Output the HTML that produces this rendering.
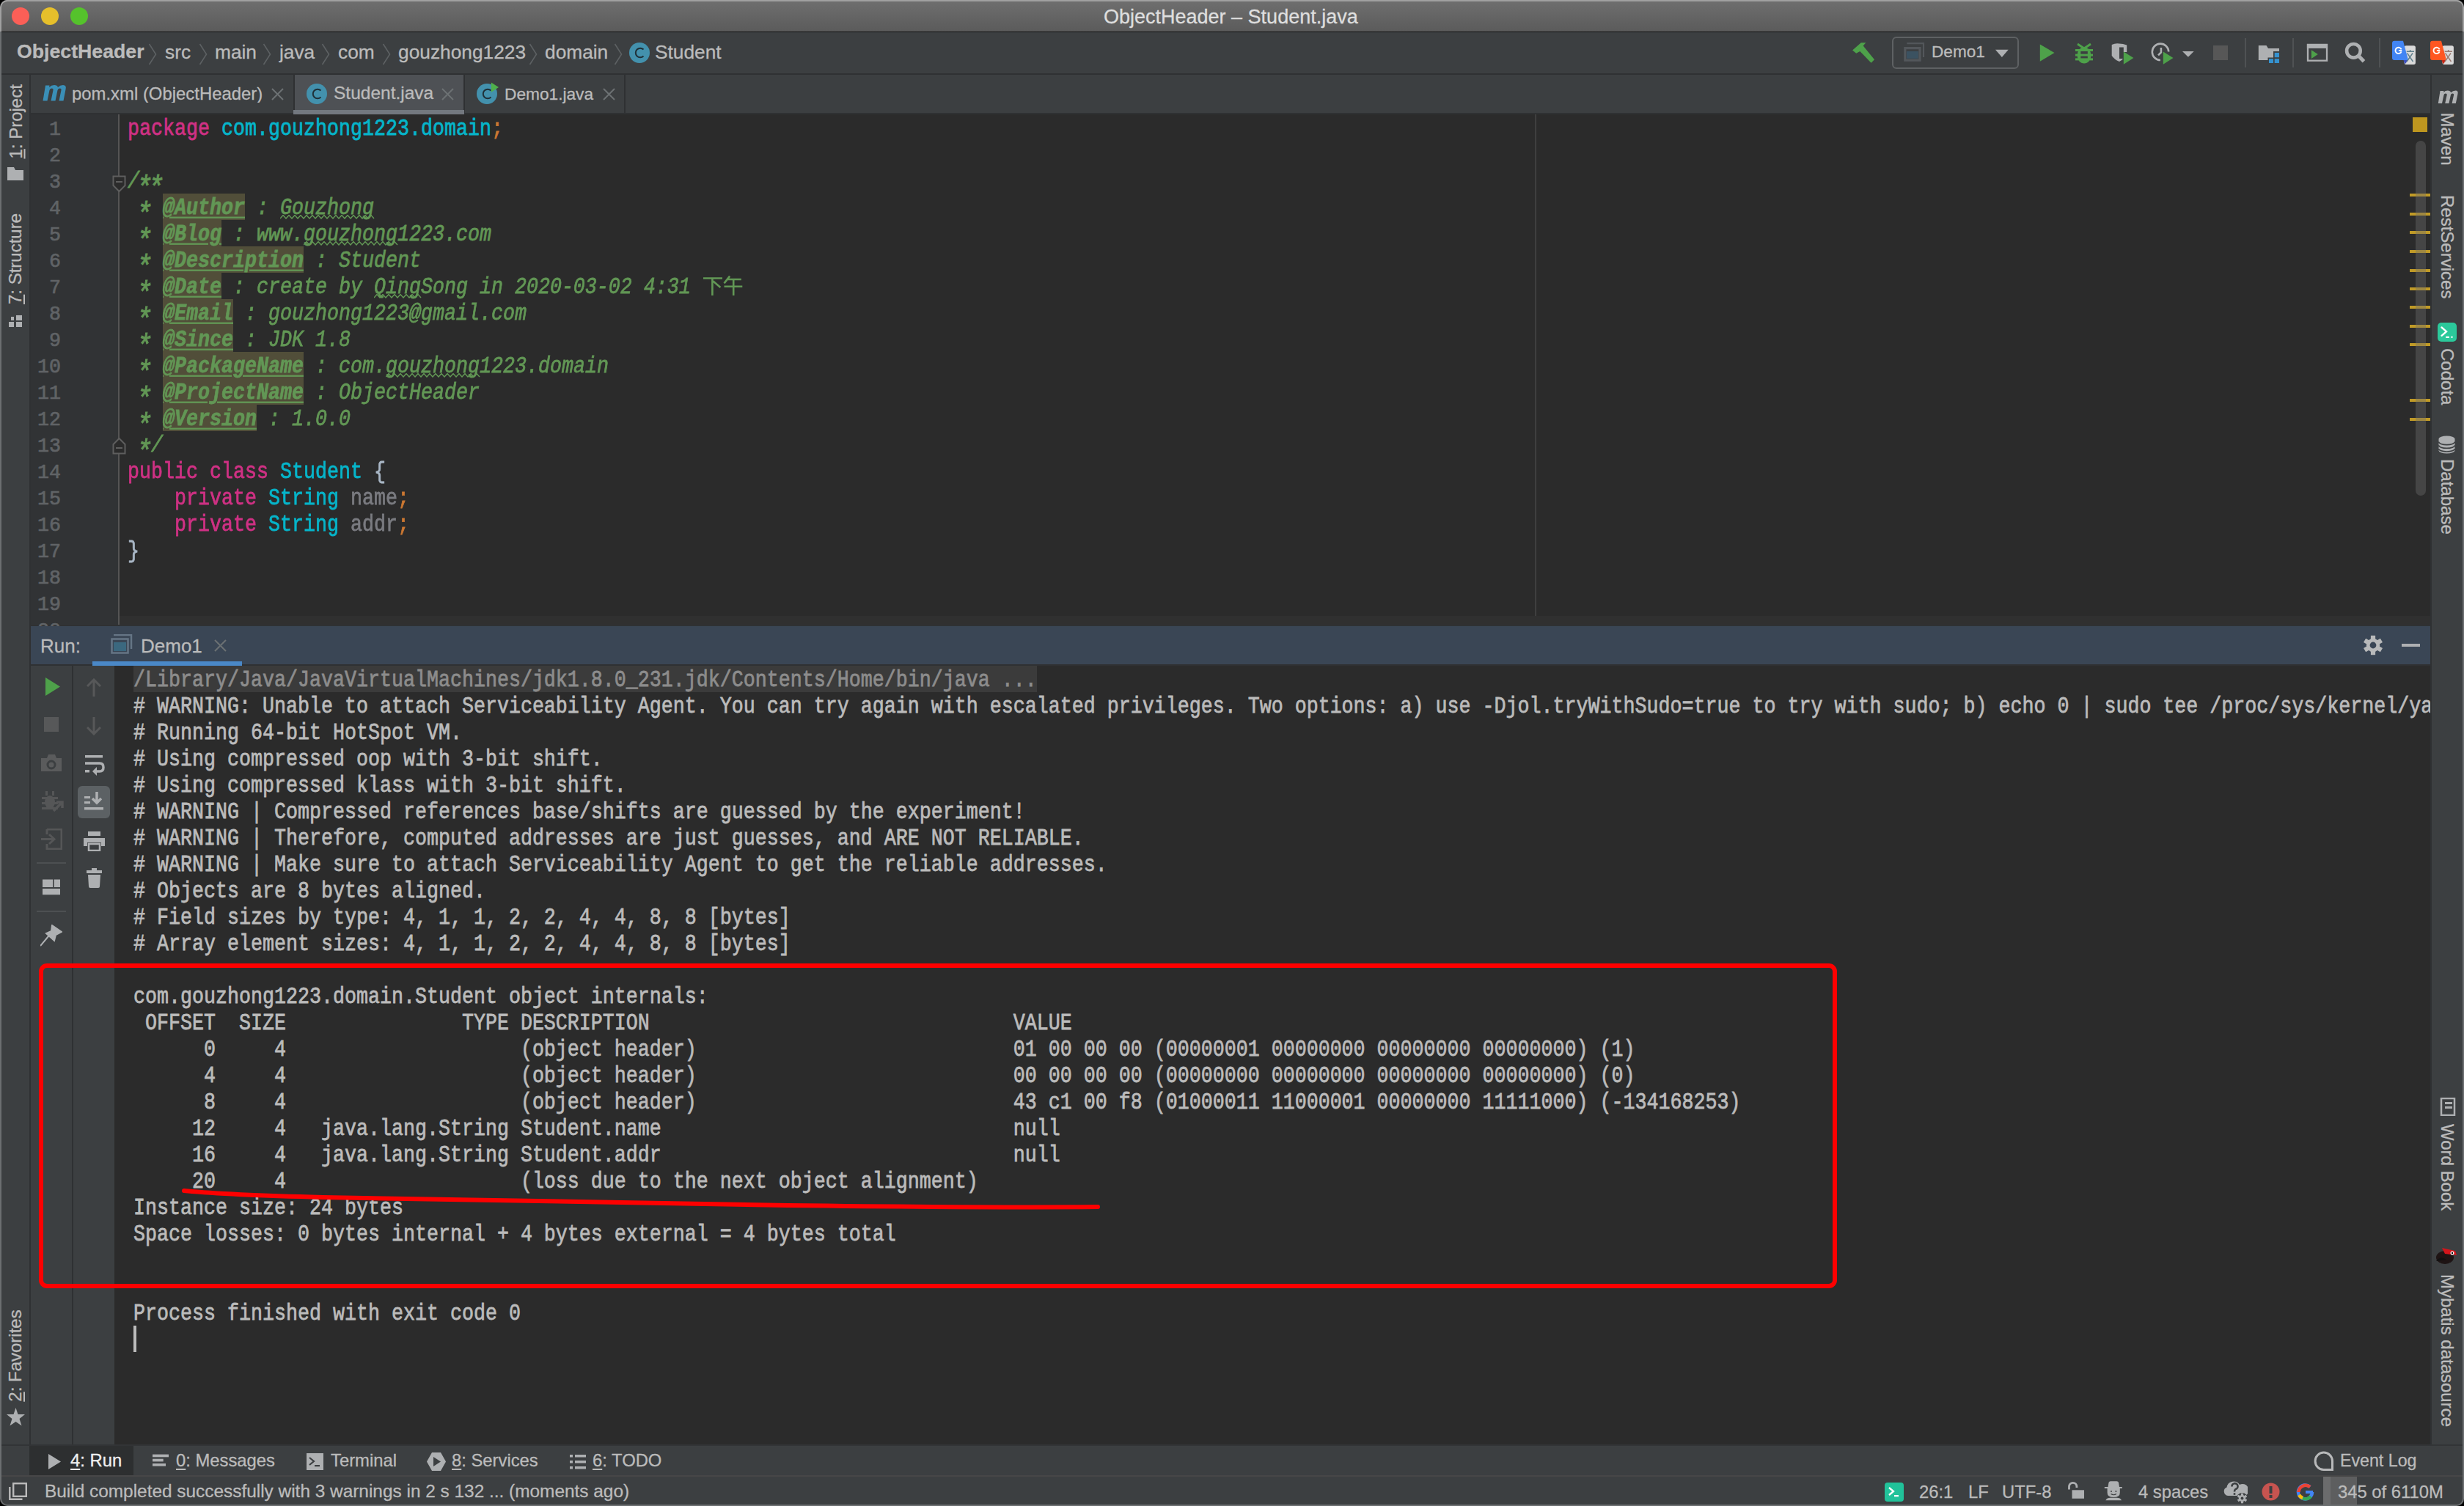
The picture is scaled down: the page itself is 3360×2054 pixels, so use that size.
<!DOCTYPE html><html><head><meta charset="utf-8"><style>
html,body{margin:0;padding:0;background:#000;width:3360px;height:2054px;overflow:hidden}
#w{position:absolute;left:0;top:0;width:3360px;height:2054px;border-radius:10px;overflow:hidden;background:#3c3f41}
#w div{position:absolute}
#w div div{position:absolute}
.t{font-family:"Liberation Sans", sans-serif;white-space:pre;-webkit-text-stroke:0.3px currentColor}
.m{font-family:"Liberation Mono", monospace;font-size:26.67px;line-height:36px;white-space:pre;color:#bbbbbb;transform-origin:0 25.1px;transform:scaleY(1.18);-webkit-text-stroke:0.65px currentColor}
.ln{color:#606366;transform:scaleY(1.06)}
u{text-underline-offset:3px}
.ast{display:inline-block;transform:translate(-1.5px,9px) scale(1.35)}
i{font-style:italic}
</style></head><body><div id="w"><div style="left:0px;top:0px;width:3360px;height:43px;background:linear-gradient(#6e6e6e,#5b5b5b);border-top:2px solid #a4a4a4;box-sizing:border-box"></div>
<div style="left:0px;top:43px;width:3360px;height:1px;background:#0e0e0e"></div>
<div style="left:16px;top:10px;width:24px;height:24px;background:#fb5f57;border-radius:50%"></div>
<div style="left:56px;top:10px;width:24px;height:24px;background:#e6bf2b;border-radius:50%"></div>
<div style="left:96px;top:10px;width:24px;height:24px;background:#55c22c;border-radius:50%"></div>
<div class="t" style="left:1505px;top:9.64px;font-size:27px;line-height:27px;color:#dedede;font-weight:400;">ObjectHeader – Student.java</div>
<div style="left:0px;top:44px;width:3360px;height:56px;background:#3c3f41"></div>
<div style="left:0px;top:100px;width:3360px;height:2px;background:#2f3133"></div>
<div class="t" style="left:23px;top:57.39px;font-size:26.7px;line-height:26.7px;color:#bbbbbb;font-weight:700;">ObjectHeader</div>
<svg style="position:absolute;left:202px;top:59px;" width="12" height="30" viewBox="0 0 12 30"><polyline points="1.5,1 10.5,15 1.5,29" fill="none" stroke="#5d6163" stroke-width="1.6"/></svg>
<svg style="position:absolute;left:271px;top:59px;" width="12" height="30" viewBox="0 0 12 30"><polyline points="1.5,1 10.5,15 1.5,29" fill="none" stroke="#5d6163" stroke-width="1.6"/></svg>
<svg style="position:absolute;left:358px;top:59px;" width="12" height="30" viewBox="0 0 12 30"><polyline points="1.5,1 10.5,15 1.5,29" fill="none" stroke="#5d6163" stroke-width="1.6"/></svg>
<svg style="position:absolute;left:438px;top:59px;" width="12" height="30" viewBox="0 0 12 30"><polyline points="1.5,1 10.5,15 1.5,29" fill="none" stroke="#5d6163" stroke-width="1.6"/></svg>
<svg style="position:absolute;left:521px;top:59px;" width="12" height="30" viewBox="0 0 12 30"><polyline points="1.5,1 10.5,15 1.5,29" fill="none" stroke="#5d6163" stroke-width="1.6"/></svg>
<svg style="position:absolute;left:721px;top:59px;" width="12" height="30" viewBox="0 0 12 30"><polyline points="1.5,1 10.5,15 1.5,29" fill="none" stroke="#5d6163" stroke-width="1.6"/></svg>
<svg style="position:absolute;left:837px;top:59px;" width="12" height="30" viewBox="0 0 12 30"><polyline points="1.5,1 10.5,15 1.5,29" fill="none" stroke="#5d6163" stroke-width="1.6"/></svg>
<div class="t" style="left:225px;top:57.73px;font-size:26.3px;line-height:26.3px;color:#bbbbbb;font-weight:400;">src</div>
<div class="t" style="left:293px;top:57.73px;font-size:26.3px;line-height:26.3px;color:#bbbbbb;font-weight:400;">main</div>
<div class="t" style="left:381px;top:57.73px;font-size:26.3px;line-height:26.3px;color:#bbbbbb;font-weight:400;">java</div>
<div class="t" style="left:461px;top:57.73px;font-size:26.3px;line-height:26.3px;color:#bbbbbb;font-weight:400;">com</div>
<div class="t" style="left:543px;top:57.73px;font-size:26.3px;line-height:26.3px;color:#bbbbbb;font-weight:400;">gouzhong1223</div>
<div class="t" style="left:743px;top:57.73px;font-size:26.3px;line-height:26.3px;color:#bbbbbb;font-weight:400;">domain</div>
<div class="t" style="left:893px;top:57.73px;font-size:26.3px;line-height:26.3px;color:#bbbbbb;font-weight:400;">Student</div>
<svg style="position:absolute;left:856.5px;top:57px;" width="34" height="30" viewBox="0 0 34 30"><circle cx="15" cy="15" r="14" fill="#4391ad"/><path d="M20.5,10.5 A6.3,6.3 0 1 0 20.5,19.5" fill="none" stroke="#1f3038" stroke-width="2"/></svg>
<svg style="position:absolute;left:2524px;top:58px;" width="34" height="30" viewBox="0 0 34 30"><polygon points="2.1,10.5 13.8,0.2 20.3,0.2 16.7,4.6 32,23.3 27.6,27.7 12.3,11.9 7.2,14.8" fill="#4ea14a"/></svg>
<div style="left:2580px;top:50px;width:173px;height:44px;border:2px solid #5e6163;border-radius:6px;box-sizing:border-box"></div>
<svg style="position:absolute;left:2595px;top:57px;" width="31" height="29" viewBox="0 0 31 29"><path d="M5.3,2.2 L28,2.2 L28,21" fill="none" stroke="#53575b" stroke-width="2.2"/><rect x="2.8" y="8.6" width="20.2" height="16.6" fill="none" stroke="#53575b" stroke-width="3.2"/><rect x="4.9" y="12.9" width="16.1" height="10" fill="#3b5261"/></svg>
<div class="t" style="left:2634px;top:60.26px;font-size:22.6px;line-height:22.6px;color:#bbbbbb;font-weight:400;">Demo1</div>
<svg style="position:absolute;left:2720px;top:67px;" width="20" height="12" viewBox="0 0 20 12"><polygon points="1,0.7 18.7,0.7 9.9,11" fill="#aeb0b2"/></svg>
<svg style="position:absolute;left:2781px;top:59px;" width="22" height="27" viewBox="0 0 22 27"><polygon points="0.8,1.4 20.5,13.1 0.8,24.8" fill="#4ea14a"/></svg>
<svg style="position:absolute;left:2828px;top:57px;" width="28" height="32" viewBox="0 0 28 32"><g fill="#4ea14a"><path d="M5,3 L14,9 L23,3" fill="none" stroke="#4ea14a" stroke-width="3"/><ellipse cx="14" cy="18.5" rx="9.5" ry="11"/><rect x="2" y="10" width="24" height="3"/><rect x="2" y="16.6" width="24" height="3"/><rect x="2" y="22.4" width="24" height="3"/></g><rect x="9.3" y="13" width="9.5" height="3.6" fill="#3c3f41"/><rect x="9.3" y="19.6" width="9.5" height="2.8" fill="#3c3f41"/></svg>
<svg style="position:absolute;left:2878px;top:58px;" width="34" height="32" viewBox="0 0 34 32"><path d="M1.7,3 Q7,0.5 12,1.5 Q17,1.5 22.2,3.5 L22.2,13 L17.8,13 L17.8,6.5 L12,6.5 L12,22 L17,22 Q16,24 12,26 Q5,23 1.7,18 Z" fill="#aeb0b2"/><polygon points="17.8,12.4 31.4,21 17.8,29.7" fill="#4ea14a"/></svg>
<svg style="position:absolute;left:2932px;top:57px;" width="36" height="34" viewBox="0 0 36 34"><path d="M14,25 A11.2,11.2 0 1 1 25.2,13.5" fill="none" stroke="#aeb0b2" stroke-width="2.6"/><path d="M14.9,8 L14.9,14.4 L11,18.3" fill="none" stroke="#aeb0b2" stroke-width="2.6"/><polygon points="17.8,13.4 31.5,22 17.8,30.7" fill="#4ea14a"/></svg>
<svg style="position:absolute;left:2975px;top:69px;" width="18" height="10" viewBox="0 0 18 10"><polygon points="1,0.9 16.7,0.9 8.9,8.7" fill="#aeb0b2"/></svg>
<div style="left:3018px;top:62px;width:20px;height:20px;background:#575757"></div>
<div style="left:3061px;top:52px;width:2px;height:40px;background:#4f5254"></div>
<svg style="position:absolute;left:3078px;top:60px;" width="32" height="28" viewBox="0 0 32 28"><path d="M1.8,2.1 L12.5,2.1 L15,6 L30,6 L30,10 L22,10 L22,18.5 L14.5,18.5 L14.5,22.1 L1.8,22.1 Z" fill="#aeb0b2"/><rect x="23.7" y="11.9" width="6.3" height="6.3" fill="#3592d0"/><rect x="16" y="20.1" width="6" height="5.9" fill="#3592d0"/><rect x="23.7" y="20.1" width="6.3" height="5.9" fill="#3592d0"/></svg>
<div style="left:3126px;top:52px;width:2px;height:40px;background:#4f5254"></div>
<svg style="position:absolute;left:3145px;top:59px;" width="30" height="26" viewBox="0 0 30 26"><rect x="2" y="2" width="26" height="21.7" fill="none" stroke="#aeb0b2" stroke-width="2.3"/><rect x="0.9" y="0.9" width="28" height="6" fill="#aeb0b2"/><polygon points="6.9,9.3 15.8,14.9 6.9,21" fill="#4ea14a"/></svg>
<svg style="position:absolute;left:3197px;top:57px;" width="32" height="32" viewBox="0 0 32 32"><circle cx="12.4" cy="12.3" r="9.3" fill="none" stroke="#aeb0b2" stroke-width="4.6"/><line x1="18.8" y1="18.8" x2="26.5" y2="26.8" stroke="#aeb0b2" stroke-width="5"/></svg>
<div style="left:3244px;top:52px;width:2px;height:40px;background:#4f5254"></div>
<svg style="position:absolute;left:3260px;top:54px;" width="36" height="36" viewBox="0 0 36 36"><rect x="18.5" y="8.3" width="15.4" height="25.7" rx="2.5" fill="#dadada"/><path d="M5,1.7 L17,1.7 L24,27.9 L5,27.9 Q2,27.9 2,24.9 L2,4.7 Q2,1.7 5,1.7 Z" fill="#4285f4"/><polygon points="17.5,27.9 24,27.9 19.4,33.5" fill="#3a4dbf"/><path d="M14.6,13.4 A4.2,4.2 0 1 0 14.6,16.4 M10.9,14.9 L15.3,14.9" fill="none" stroke="#fff" stroke-width="1.9"/><g stroke="#5f7f8c" stroke-width="1.4" fill="none"><path d="M21.7,16.2 L32,16.2 M26.6,14 L26.6,16.2 M22.5,18.5 L30.5,30 M30,18.5 L22,30"/></g></svg>
<svg style="position:absolute;left:3312.3px;top:54px;" width="36" height="36" viewBox="0 0 36 36"><rect x="18.5" y="8.3" width="15.4" height="25.7" rx="2.5" fill="#dadada"/><path d="M5,1.7 L17,1.7 L24,27.9 L5,27.9 Q2,27.9 2,24.9 L2,4.7 Q2,1.7 5,1.7 Z" fill="#ff5722"/><polygon points="17.5,27.9 24,27.9 19.4,33.5" fill="#c62817"/><path d="M14.6,13.4 A4.2,4.2 0 1 0 14.6,16.4 M10.9,14.9 L15.3,14.9" fill="none" stroke="#fff" stroke-width="1.9"/><g stroke="#9a7b72" stroke-width="1.4" fill="none"><path d="M21.7,16.2 L32,16.2 M26.6,14 L26.6,16.2 M22.5,18.5 L30.5,30 M30,18.5 L22,30"/></g></svg>
<div style="left:0px;top:102px;width:40px;height:1868px;background:#3c3f41"></div>
<div style="left:40px;top:102px;width:2px;height:1868px;background:#2f3133"></div>
<div style="left:3316px;top:102px;width:44px;height:1868px;background:#3c3f41"></div>
<div style="left:3314px;top:102px;width:2px;height:1868px;background:#2f3133"></div>
<div style="left:0px;top:44px;width:2px;height:2000px;background:#5d6062"></div>
<div style="left:3358px;top:44px;width:2px;height:2000px;background:#5d6062"></div>
<div class="t" style="left:-29.5px;top:153.5px;width:101px;height:24px;font-size:24px;line-height:24px;color:#bbbbbb;text-align:center;transform:rotate(-90deg)"><u>1</u>: Project</div>
<svg style="position:absolute;left:10px;top:228px;" width="23" height="19" viewBox="0 0 23 19"><path d="M0,0 L9,0 L11,4 L22,4 L22,18 L0,18 Z" fill="#aeb0b2"/></svg>
<div class="t" style="left:-42.0px;top:341.0px;width:126px;height:24px;font-size:24px;line-height:24px;color:#bbbbbb;text-align:center;transform:rotate(-90deg)"><u>7</u>: Structure</div>
<svg style="position:absolute;left:12px;top:428px;" width="19" height="19" viewBox="0 0 19 19"><rect x="0" y="11" width="7" height="7" fill="#aeb0b2"/><rect x="10" y="11" width="8" height="7" fill="#aeb0b2"/><rect x="10" y="2" width="8" height="7" fill="#aeb0b2"/><rect x="3" y="4" width="4" height="5" fill="#aeb0b2"/></svg>
<div class="t" style="left:-42.0px;top:1837.0px;width:126px;height:24px;font-size:24px;line-height:24px;color:#bbbbbb;text-align:center;transform:rotate(-90deg)"><u>2</u>: Favorites</div>
<svg style="position:absolute;left:9px;top:1920px;" width="25" height="25" viewBox="0 0 25 25"><polygon points="12.5,0 15.5,9 25,9 17.5,15 20.5,24.5 12.5,19 4.5,24.5 7.5,15 0,9 9.5,9" fill="#aeb0b2"/></svg>
<svg style="position:absolute;left:3323px;top:122px;" width="30" height="21" viewBox="0 0 30 21"><path d="M4.5,2 L9.5,2 L9.1,4 Q11.5,1.6 14.8,1.6 Q18.2,1.6 19.2,4.2 Q21.8,1.6 25.5,1.6 Q29.6,1.6 28.4,6.6 L25.8,19 L20.6,19 L23.1,7.5 Q23.5,5.5 21.4,5.5 Q19.3,5.5 18.9,7.5 L16.4,19 L11.2,19 L13.7,7.5 Q14.1,5.5 12,5.5 Q9.9,5.5 9.5,7.5 L7,19 L1.8,19 Z" fill="#aeb0b2"/></svg>
<div class="t" style="left:3302.0px;top:175.5px;width:69px;height:24px;font-size:24px;line-height:24px;color:#bbbbbb;text-align:center;transform:rotate(90deg)">Maven</div>
<div class="t" style="left:3267.5px;top:323.0px;width:138px;height:24px;font-size:24px;line-height:24px;color:#bbbbbb;text-align:center;transform:rotate(90deg)">RestServices</div>
<svg style="position:absolute;left:3324px;top:440px;" width="26" height="26" viewBox="0 0 26 26"><rect x="0" y="0" width="26" height="26" rx="5" fill="#2bc99b"/><path d="M5.5,6.5 L12,12.2 L5.5,17.8" fill="none" stroke="#fff" stroke-width="2.4" stroke-linecap="round"/><rect x="11" y="18.7" width="5" height="2.2" rx="1" fill="#fff"/><circle cx="19.5" cy="19.8" r="1.2" fill="#fff"/></svg>
<div class="t" style="left:3298.5px;top:501.0px;width:76px;height:24px;font-size:24px;line-height:24px;color:#bbbbbb;text-align:center;transform:rotate(90deg)">Codota</div>
<svg style="position:absolute;left:3325px;top:594px;" width="23" height="25" viewBox="0 0 23 25"><path d="M0.5,4.5 A11,4 0 0 1 22.5,4.5 L22.5,20.5 A11,4 0 0 1 0.5,20.5 Z" fill="#aeb0b2"/><path d="M0.5,8.6 A11,4 0 0 0 22.5,8.6 M0.5,13.3 A11,4 0 0 0 22.5,13.3 M0.5,18 A11,4 0 0 0 22.5,18" fill="none" stroke="#3c3f41" stroke-width="1.6"/></svg>
<div class="t" style="left:3285.5px;top:665.0px;width:102px;height:24px;font-size:24px;line-height:24px;color:#bbbbbb;text-align:center;transform:rotate(90deg)">Database</div>
<svg style="position:absolute;left:3327px;top:1497px;" width="22" height="25" viewBox="0 0 22 25"><rect x="2" y="1" width="18" height="23" fill="none" stroke="#aeb0b2" stroke-width="2.5"/><rect x="7" y="6" width="10" height="3" fill="#aeb0b2"/><rect x="7" y="12" width="10" height="3" fill="#aeb0b2"/></svg>
<div class="t" style="left:3279.5px;top:1578.0px;width:114px;height:24px;font-size:24px;line-height:24px;color:#bbbbbb;text-align:center;transform:rotate(90deg)">Word Book</div>
<svg style="position:absolute;left:3320px;top:1698px;" width="32" height="27" viewBox="0 0 32 27"><ellipse cx="14" cy="17" rx="12" ry="9" fill="#1e1414"/><path d="M2,22 Q8,14 16,20" fill="#111"/><path d="M10,4 L28,8 L30,14 L14,12 Z" fill="#d3151b"/><circle cx="24" cy="11" r="2.5" fill="#fff"/><circle cx="24" cy="11" r="1.2" fill="#000"/></svg>
<div class="t" style="left:3231.5px;top:1830.0px;width:210px;height:24px;font-size:24px;line-height:24px;color:#bbbbbb;text-align:center;transform:rotate(90deg)">Mybatis datasource</div>
<div style="left:42px;top:102px;width:3272px;height:52px;background:#3c3f41"></div>
<div style="left:42px;top:154px;width:3272px;height:2px;background:#2f3133"></div>
<div style="left:400px;top:102px;width:2px;height:52px;background:#2f3133"></div>
<div style="left:402px;top:102px;width:230px;height:52px;background:#4e5155"></div>
<div style="left:632px;top:102px;width:2px;height:52px;background:#2f3133"></div>
<div style="left:851px;top:102px;width:2px;height:52px;background:#2f3133"></div>
<div style="left:400px;top:150px;width:233px;height:6px;background:#73787f"></div>
<svg style="position:absolute;left:57px;top:114px;" width="34" height="28" viewBox="0 0 34 28"><path d="M5,2.5 L10.5,2.5 L10,5 Q13,2 17,2 Q21,2 22,5 Q25,2 29,2 Q34,2 32.5,8 L29.5,23.5 L23.5,23.5 L26.5,9 Q27,6.5 24.5,6.5 Q22,6.5 21.5,9 L18.5,23.5 L12.5,23.5 L15.5,9 Q16,6.5 13.5,6.5 Q11,6.5 10.5,9 L7.5,23.5 L1.5,23.5 Z" fill="#3a8fb7"/></svg>
<div class="t" style="left:98px;top:115.96px;width:262px;overflow:hidden;font-size:23.9px;line-height:23.9px;color:#bbbbbb">pom.xml (ObjectHeader)</div>
<svg style="position:absolute;left:370px;top:120px;" width="17" height="17" viewBox="0 0 17 17"><path d="M1,1 L16,16 M16,1 L1,16" stroke="#6c7173" stroke-width="2"/></svg>
<svg style="position:absolute;left:417px;top:113px;" width="34" height="30" viewBox="0 0 34 30"><circle cx="15" cy="15" r="14" fill="#4391ad"/><path d="M20.5,10.5 A6.3,6.3 0 1 0 20.5,19.5" fill="none" stroke="#1f3038" stroke-width="2"/></svg>
<div class="t" style="left:455px;top:115.46px;font-size:24.5px;line-height:24.5px;color:#bbbbbb;font-weight:400;">Student.java</div>
<svg style="position:absolute;left:602px;top:120px;" width="17" height="17" viewBox="0 0 17 17"><path d="M1,1 L16,16 M16,1 L1,16" stroke="#6c7173" stroke-width="2"/></svg>
<svg style="position:absolute;left:649px;top:113px;" width="34" height="30" viewBox="0 0 34 30"><circle cx="15" cy="15" r="14" fill="#4391ad"/><path d="M20.5,10.5 A6.3,6.3 0 1 0 20.5,19.5" fill="none" stroke="#1f3038" stroke-width="2"/></svg>
<svg style="position:absolute;left:669px;top:112px;" width="12" height="15" viewBox="0 0 12 15"><polygon points="0.9,0.4 11,7 0.9,13.7" fill="#4fb14b"/></svg>
<div class="t" style="left:688px;top:116.98px;font-size:22.7px;line-height:22.7px;color:#bbbbbb;font-weight:400;">Demo1.java</div>
<svg style="position:absolute;left:822px;top:120px;" width="17" height="17" viewBox="0 0 17 17"><path d="M1,1 L16,16 M16,1 L1,16" stroke="#6c7173" stroke-width="2"/></svg>
<div style="left:42px;top:156px;width:119px;height:696px;background:#313335"></div>
<div style="left:163px;top:156px;width:3151px;height:684px;background:#2b2b2b"></div>
<div style="left:163px;top:840px;width:3151px;height:12px;background:#303030"></div>
<div style="left:161px;top:156px;width:2px;height:696px;background:#555555"></div>
<div style="left:2093px;top:156px;width:2px;height:684px;background:#3f3f3f"></div>
<div style="left:42px;top:852px;width:3272px;height:2px;background:#2f3133"></div>
<div style="left:3290px;top:160px;width:20px;height:20px;background:#be961f"></div>
<div style="left:3286px;top:264px;width:28px;height:4px;background:#c09a26"></div>
<div style="left:3286px;top:290px;width:28px;height:4px;background:#c09a26"></div>
<div style="left:3286px;top:315px;width:28px;height:4px;background:#c09a26"></div>
<div style="left:3286px;top:341px;width:28px;height:4px;background:#c09a26"></div>
<div style="left:3286px;top:367px;width:28px;height:4px;background:#c09a26"></div>
<div style="left:3286px;top:392px;width:28px;height:4px;background:#c09a26"></div>
<div style="left:3286px;top:417px;width:28px;height:4px;background:#c09a26"></div>
<div style="left:3286px;top:443px;width:28px;height:4px;background:#c09a26"></div>
<div style="left:3286px;top:468px;width:28px;height:4px;background:#c09a26"></div>
<div style="left:3286px;top:544px;width:28px;height:4px;background:#c09a26"></div>
<div style="left:3286px;top:570px;width:28px;height:4px;background:#c09a26"></div>
<div style="left:3294px;top:192px;width:14px;height:484px;background:rgba(110,110,110,0.4);border-radius:7px"></div>
<div class="m ln" style="left:67px;top:158.9px">1</div>
<div class="m ln" style="left:67px;top:194.9px">2</div>
<div class="m ln" style="left:67px;top:230.9px">3</div>
<div class="m ln" style="left:67px;top:266.9px">4</div>
<div class="m ln" style="left:67px;top:302.9px">5</div>
<div class="m ln" style="left:67px;top:338.9px">6</div>
<div class="m ln" style="left:67px;top:374.9px">7</div>
<div class="m ln" style="left:67px;top:410.9px">8</div>
<div class="m ln" style="left:67px;top:446.9px">9</div>
<div class="m ln" style="left:51px;top:482.9px">10</div>
<div class="m ln" style="left:51px;top:518.9px">11</div>
<div class="m ln" style="left:51px;top:554.9px">12</div>
<div class="m ln" style="left:51px;top:590.9px">13</div>
<div class="m ln" style="left:51px;top:626.9px">14</div>
<div class="m ln" style="left:51px;top:662.9px">15</div>
<div class="m ln" style="left:51px;top:698.9px">16</div>
<div class="m ln" style="left:51px;top:734.9px">17</div>
<div class="m ln" style="left:51px;top:770.9px">18</div>
<div class="m ln" style="left:51px;top:806.9px">19</div>
<div class="m ln" style="left:51px;top:842.9px">20</div>
<div style="left:222px;top:264px;width:112px;height:36px;background:#514e39"></div>
<div style="left:222px;top:300px;width:80px;height:36px;background:#514e39"></div>
<div style="left:222px;top:336px;width:192px;height:36px;background:#514e39"></div>
<div style="left:222px;top:372px;width:80px;height:36px;background:#514e39"></div>
<div style="left:222px;top:408px;width:96px;height:36px;background:#514e39"></div>
<div style="left:222px;top:444px;width:96px;height:36px;background:#514e39"></div>
<div style="left:222px;top:480px;width:192px;height:36px;background:#514e39"></div>
<div style="left:222px;top:516px;width:192px;height:36px;background:#514e39"></div>
<div style="left:222px;top:552px;width:128px;height:36px;background:#514e39"></div>
<div class="m" style="left:174px;top:158.9px"><span style="color:#cf3184;">package</span> <span style="color:#06b5ca;">com.gouzhong1223.domain</span><span style="color:#cc7832;">;</span></div>
<div class="m" style="left:174px;top:230.9px"><i style="color:#629755">/<span class="ast">*</span><span class="ast">*</span></i></div>
<div class="m" style="left:174px;top:266.9px"><i style="color:#629755"> <span class="ast">*</span> <span style="color:#629755;font-weight:700;text-decoration:underline;text-underline-offset:3px;text-decoration-thickness:2px">@Author</span> : Gouzhong</i></div>
<div class="m" style="left:174px;top:302.9px"><i style="color:#629755"> <span class="ast">*</span> <span style="color:#629755;font-weight:700;text-decoration:underline;text-underline-offset:3px;text-decoration-thickness:2px">@Blog</span> : www.gouzhong1223.com</i></div>
<div class="m" style="left:174px;top:338.9px"><i style="color:#629755"> <span class="ast">*</span> <span style="color:#629755;font-weight:700;text-decoration:underline;text-underline-offset:3px;text-decoration-thickness:2px">@Description</span> : Student</i></div>
<div class="m" style="left:174px;top:374.9px"><i style="color:#629755"> <span class="ast">*</span> <span style="color:#629755;font-weight:700;text-decoration:underline;text-underline-offset:3px;text-decoration-thickness:2px">@Date</span> : create by QingSong in 2020-03-02 4:31 </i></div>
<div class="m" style="left:174px;top:410.9px"><i style="color:#629755"> <span class="ast">*</span> <span style="color:#629755;font-weight:700;text-decoration:underline;text-underline-offset:3px;text-decoration-thickness:2px">@Email</span> : gouzhong1223@gmail.com</i></div>
<div class="m" style="left:174px;top:446.9px"><i style="color:#629755"> <span class="ast">*</span> <span style="color:#629755;font-weight:700;text-decoration:underline;text-underline-offset:3px;text-decoration-thickness:2px">@Since</span> : JDK 1.8</i></div>
<div class="m" style="left:174px;top:482.9px"><i style="color:#629755"> <span class="ast">*</span> <span style="color:#629755;font-weight:700;text-decoration:underline;text-underline-offset:3px;text-decoration-thickness:2px">@PackageName</span> : com.gouzhong1223.domain</i></div>
<div class="m" style="left:174px;top:518.9px"><i style="color:#629755"> <span class="ast">*</span> <span style="color:#629755;font-weight:700;text-decoration:underline;text-underline-offset:3px;text-decoration-thickness:2px">@ProjectName</span> : ObjectHeader</i></div>
<div class="m" style="left:174px;top:554.9px"><i style="color:#629755"> <span class="ast">*</span> <span style="color:#629755;font-weight:700;text-decoration:underline;text-underline-offset:3px;text-decoration-thickness:2px">@Version</span> : 1.0.0</i></div>
<div class="m" style="left:174px;top:590.9px"><i style="color:#629755"> <span class="ast">*</span>/</i></div>
<div class="m" style="left:174px;top:626.9px"><span style="color:#cf3184;">public class</span> <span style="color:#06b5ca;">Student</span> <span style="color:#a9b7c6;">{</span></div>
<div class="m" style="left:174px;top:662.9px">    <span style="color:#cf3184;">private</span> <span style="color:#06b5ca;">String</span> <span style="color:#7a7b80;">name</span><span style="color:#cc7832;">;</span></div>
<div class="m" style="left:174px;top:698.9px">    <span style="color:#cf3184;">private</span> <span style="color:#06b5ca;">String</span> <span style="color:#7a7b80;">addr</span><span style="color:#cc7832;">;</span></div>
<div class="m" style="left:174px;top:734.9px"><span style="color:#a9b7c6;">}</span></div>
<svg style="position:absolute;left:958px;top:374px;" width="60" height="32" viewBox="0 0 60 32"><g stroke="#629755" stroke-width="2.6" fill="none"><path d="M1,5.5 L27,5.5 M13.4,5.5 L13.4,29 M14.5,9.5 L24.4,17.9"/><path d="M37.1,2.6 L29.5,12.4 M33.5,7 L52.8,7 M29.5,16.8 L54.3,16.8 M42.2,7 L42.2,29"/></g></svg>
<svg style="position:absolute;left:382px;top:293.3px;" width="129" height="6" viewBox="0 0 129 6"><path d="M0,5 L4,0.6 L8,5 L12,0.6 L16,5 L20,0.6 L24,5 L28,0.6 L32,5 L36,0.6 L40,5 L44,0.6 L48,5 L52,0.6 L56,5 L60,0.6 L64,5 L68,0.6 L72,5 L76,0.6 L80,5 L84,0.6 L88,5 L92,0.6 L96,5 L100,0.6 L104,5 L108,0.6 L112,5 L116,0.6 L120,5 L124,0.6 L128,5" fill="none" stroke="#629755" stroke-width="1.5"/></svg>
<svg style="position:absolute;left:414px;top:329.3px;" width="129" height="6" viewBox="0 0 129 6"><path d="M0,5 L4,0.6 L8,5 L12,0.6 L16,5 L20,0.6 L24,5 L28,0.6 L32,5 L36,0.6 L40,5 L44,0.6 L48,5 L52,0.6 L56,5 L60,0.6 L64,5 L68,0.6 L72,5 L76,0.6 L80,5 L84,0.6 L88,5 L92,0.6 L96,5 L100,0.6 L104,5 L108,0.6 L112,5 L116,0.6 L120,5 L124,0.6 L128,5" fill="none" stroke="#629755" stroke-width="1.5"/></svg>
<svg style="position:absolute;left:510px;top:401.3px;" width="65" height="6" viewBox="0 0 65 6"><path d="M0,5 L4,0.6 L8,5 L12,0.6 L16,5 L20,0.6 L24,5 L28,0.6 L32,5 L36,0.6 L40,5 L44,0.6 L48,5 L52,0.6 L56,5 L60,0.6 L64,5" fill="none" stroke="#629755" stroke-width="1.5"/></svg>
<svg style="position:absolute;left:526px;top:509.3px;" width="129" height="6" viewBox="0 0 129 6"><path d="M0,5 L4,0.6 L8,5 L12,0.6 L16,5 L20,0.6 L24,5 L28,0.6 L32,5 L36,0.6 L40,5 L44,0.6 L48,5 L52,0.6 L56,5 L60,0.6 L64,5 L68,0.6 L72,5 L76,0.6 L80,5 L84,0.6 L88,5 L92,0.6 L96,5 L100,0.6 L104,5 L108,0.6 L112,5 L116,0.6 L120,5 L124,0.6 L128,5" fill="none" stroke="#629755" stroke-width="1.5"/></svg>
<svg style="position:absolute;left:153px;top:239px;" width="19" height="24" viewBox="0 0 19 24"><path d="M1.5,1.5 L17.5,1.5 L17.5,14 L9.5,22 L1.5,14 Z" fill="#2b2b2b" stroke="#5e5e5e" stroke-width="2"/><line x1="5" y1="9" x2="14" y2="9" stroke="#5e5e5e" stroke-width="2"/></svg>
<svg style="position:absolute;left:153px;top:596px;" width="19" height="24" viewBox="0 0 19 24"><path d="M1.5,22.5 L17.5,22.5 L17.5,10 L9.5,2 L1.5,10 Z" fill="#2b2b2b" stroke="#5e5e5e" stroke-width="2"/><line x1="5" y1="15" x2="14" y2="15" stroke="#5e5e5e" stroke-width="2"/></svg>
<div style="left:42px;top:854px;width:3272px;height:52px;background:#3a4655"></div>
<div style="left:42px;top:906px;width:3272px;height:2px;background:#2f3133"></div>
<div style="left:126px;top:902px;width:204px;height:6px;background:#4a88c7"></div>
<div class="t" style="left:55px;top:867.99px;font-size:26px;line-height:26px;color:#bbbbbb;font-weight:400;">Run:</div>
<svg style="position:absolute;left:151px;top:865px;" width="31" height="28" viewBox="0 0 31 28"><path d="M4,1 L28,1 L28,20" fill="none" stroke="#657585" stroke-width="2.5"/><rect x="1.5" y="6.5" width="22" height="19" fill="none" stroke="#657585" stroke-width="2.5"/><rect x="4" y="11" width="17" height="12" fill="#3b687f"/></svg>
<div class="t" style="left:192px;top:867.99px;font-size:26px;line-height:26px;color:#bbbbbb;font-weight:400;">Demo1</div>
<svg style="position:absolute;left:292px;top:872px;" width="17" height="17" viewBox="0 0 17 17"><path d="M1,1 L16,16 M16,1 L1,16" stroke="#6c7173" stroke-width="2"/></svg>
<svg style="position:absolute;left:3222px;top:866px;" width="28" height="28" viewBox="0 0 28 28"><g fill="#b8b9ba"><circle cx="14" cy="14" r="9.2"/><rect x="10.9" y="0.8" width="6.2" height="26.4" transform="rotate(0 14 14)"/><rect x="10.9" y="0.8" width="6.2" height="26.4" transform="rotate(60 14 14)"/><rect x="10.9" y="0.8" width="6.2" height="26.4" transform="rotate(120 14 14)"/></g><circle cx="14" cy="14" r="4.4" fill="#3a4655"/></svg>
<div style="left:3275px;top:878px;width:25px;height:4px;background:#aeb0b2"></div>
<div style="left:42px;top:908px;width:56px;height:1062px;background:#3c3f41"></div>
<div style="left:98px;top:908px;width:2px;height:1062px;background:#2f3133"></div>
<div style="left:100px;top:908px;width:56px;height:1062px;background:#3c3f41"></div>
<svg style="position:absolute;left:62px;top:924px;" width="20" height="25" viewBox="0 0 20 25"><polygon points="0,0 20,12.5 0,25" fill="#4ea14a"/></svg>
<div style="left:60px;top:978px;width:20px;height:20px;background:#575859"></div>
<svg style="position:absolute;left:56px;top:1028px;" width="29" height="25" viewBox="0 0 29 25"><path d="M0,6 L8,6 L10,1 L19,1 L21,6 L28,6 L28,24 L0,24 Z" fill="#5a5b5c"/><circle cx="14" cy="15" r="5" fill="none" stroke="#3c3f41" stroke-width="3"/></svg>
<svg style="position:absolute;left:57px;top:1078px;" width="30" height="30" viewBox="0 0 30 30"><g fill="#555657"><ellipse cx="11" cy="16" rx="7" ry="9"/><rect x="0" y="9" width="22" height="3"/><rect x="0" y="16" width="22" height="3"/><rect x="0" y="23" width="22" height="3"/><rect x="5" y="1" width="3" height="6"/><rect x="14" y="1" width="3" height="6"/></g><path d="M16,28 L28,16 M20,16 L28,16 L28,24" fill="none" stroke="#555657" stroke-width="3.5" stroke-width="3"/></svg>
<svg style="position:absolute;left:56px;top:1130px;" width="29" height="29" viewBox="0 0 29 29"><path d="M8,1 L28,1 L28,28 L8,28 L8,21 M8,8 L8,1" fill="none" stroke="#555657" stroke-width="3"/><path d="M0,14.5 L17,14.5 M11,8 L18,14.5 L11,21" fill="none" stroke="#555657" stroke-width="3"/></svg>
<div style="left:50px;top:1176px;width:40px;height:2px;background:#4d5052"></div>
<svg style="position:absolute;left:58px;top:1199px;" width="24" height="22" viewBox="0 0 24 22"><rect x="0" y="0.5" width="14" height="10.5" fill="#aeb0b2"/><rect x="15.6" y="0.5" width="8.4" height="10.5" fill="#aeb0b2"/><rect x="0" y="13" width="24" height="8.3" fill="#aeb0b2"/></svg>
<div style="left:50px;top:1242px;width:40px;height:2px;background:#4d5052"></div>
<svg style="position:absolute;left:55px;top:1261px;" width="30" height="30" viewBox="0 0 30 30"><path d="M16,1 L29,10 L21,14 L19,22 L8,12 L15,9 Z M11,16 L0,29" fill="#aeb0b2" stroke="#aeb0b2" stroke-width="2"/></svg>
<svg style="position:absolute;left:118px;top:925px;" width="20" height="26" viewBox="0 0 20 26"><path d="M10,25 L10,2 M1,11 L10,2 L19,11" fill="none" stroke="#575859" stroke-width="3"/></svg>
<svg style="position:absolute;left:118px;top:977px;" width="20" height="26" viewBox="0 0 20 26"><path d="M10,1 L10,24 M1,15 L10,24 L19,15" fill="none" stroke="#575859" stroke-width="3"/></svg>
<svg style="position:absolute;left:115px;top:1030px;" width="28" height="28" viewBox="0 0 28 28"><rect x="1" y="0" width="24" height="3.5" fill="#aeb0b2"/><rect x="1" y="20" width="6" height="3.5" fill="#aeb0b2"/><path d="M1,11 L21,11 Q26,11 26,16.5 Q26,22 21,22 L13,22" fill="none" stroke="#aeb0b2" stroke-width="3.5"/><polygon points="11,22 17,16 17,28" fill="#aeb0b2"/></svg>
<div style="left:106px;top:1072px;width:44px;height:44px;background:#5c6164;border-radius:6px"></div>
<svg style="position:absolute;left:115px;top:1080px;" width="26" height="28" viewBox="0 0 26 28"><rect x="0" y="6" width="8" height="3" fill="#aeb0b2"/><rect x="0" y="13" width="8" height="3" fill="#aeb0b2"/><rect x="0" y="21" width="26" height="3.5" fill="#aeb0b2"/><path d="M17,0 L17,14 M11,9 L17,15 L23,9" fill="none" stroke="#aeb0b2" stroke-width="3.5"/></svg>
<svg style="position:absolute;left:114px;top:1134px;" width="29" height="27" viewBox="0 0 29 27"><rect x="6" y="0" width="17" height="6" fill="#aeb0b2"/><path d="M0,9 L29,9 L29,20 L24,20 L24,15 L5,15 L5,20 L0,20 Z" fill="#aeb0b2"/><rect x="7" y="17" width="15" height="9" fill="none" stroke="#aeb0b2" stroke-width="2.5"/></svg>
<svg style="position:absolute;left:118px;top:1184px;" width="21" height="27" viewBox="0 0 21 27"><rect x="0" y="3" width="21" height="4" fill="#aeb0b2"/><rect x="7" y="0" width="7" height="3" fill="#aeb0b2"/><path d="M2,9 L19,9 L18,25 Q18,27 16,27 L5,27 Q3,27 3,25 Z" fill="#aeb0b2"/></svg>
<div style="left:156px;top:908px;width:3158px;height:1062px;background:#2b2b2b"></div>
<div style="left:182px;top:908px;width:1232px;height:36px;background:#3b3b3b"></div>
<div style="left:182px;top:908px;width:3132px;height:1000px;overflow:hidden">
<div class="m" style="left:0px;top:2.9px;color:#8c8c8c">/Library/Java/JavaVirtualMachines/jdk1.8.0_231.jdk/Contents/Home/bin/java ...</div>
<div class="m" style="left:0px;top:38.9px;color:#bbbbbb"># WARNING: Unable to attach Serviceability Agent. You can try again with escalated privileges. Two options: a) use -Djol.tryWithSudo=true to try with sudo; b) echo 0 | sudo tee /proc/sys/kernel/yama/ptrace_scope</div>
<div class="m" style="left:0px;top:74.9px;color:#bbbbbb"># Running 64-bit HotSpot VM.</div>
<div class="m" style="left:0px;top:110.9px;color:#bbbbbb"># Using compressed oop with 3-bit shift.</div>
<div class="m" style="left:0px;top:146.9px;color:#bbbbbb"># Using compressed klass with 3-bit shift.</div>
<div class="m" style="left:0px;top:182.9px;color:#bbbbbb"># WARNING | Compressed references base/shifts are guessed by the experiment!</div>
<div class="m" style="left:0px;top:218.9px;color:#bbbbbb"># WARNING | Therefore, computed addresses are just guesses, and ARE NOT RELIABLE.</div>
<div class="m" style="left:0px;top:254.9px;color:#bbbbbb"># WARNING | Make sure to attach Serviceability Agent to get the reliable addresses.</div>
<div class="m" style="left:0px;top:290.9px;color:#bbbbbb"># Objects are 8 bytes aligned.</div>
<div class="m" style="left:0px;top:326.9px;color:#bbbbbb"># Field sizes by type: 4, 1, 1, 2, 2, 4, 4, 8, 8 [bytes]</div>
<div class="m" style="left:0px;top:362.9px;color:#bbbbbb"># Array element sizes: 4, 1, 1, 2, 2, 4, 4, 8, 8 [bytes]</div>
<div class="m" style="left:0px;top:434.9px;color:#bbbbbb">com.gouzhong1223.domain.Student object internals:</div>
<div class="m" style="left:0px;top:470.9px;color:#bbbbbb"> OFFSET  SIZE               TYPE DESCRIPTION                               VALUE</div>
<div class="m" style="left:0px;top:506.9px;color:#bbbbbb">      0     4                    (object header)                           01 00 00 00 (00000001 00000000 00000000 00000000) (1)</div>
<div class="m" style="left:0px;top:542.9px;color:#bbbbbb">      4     4                    (object header)                           00 00 00 00 (00000000 00000000 00000000 00000000) (0)</div>
<div class="m" style="left:0px;top:578.9px;color:#bbbbbb">      8     4                    (object header)                           43 c1 00 f8 (01000011 11000001 00000000 11111000) (-134168253)</div>
<div class="m" style="left:0px;top:614.9px;color:#bbbbbb">     12     4   java.lang.String Student.name                              null</div>
<div class="m" style="left:0px;top:650.9px;color:#bbbbbb">     16     4   java.lang.String Student.addr                              null</div>
<div class="m" style="left:0px;top:686.9px;color:#bbbbbb">     20     4                    (loss due to the next object alignment)</div>
<div class="m" style="left:0px;top:722.9px;color:#bbbbbb">Instance size: 24 bytes</div>
<div class="m" style="left:0px;top:758.9px;color:#bbbbbb">Space losses: 0 bytes internal + 4 bytes external = 4 bytes total</div>
<div class="m" style="left:0px;top:866.9px;color:#bbbbbb">Process finished with exit code 0</div>
</div>
<div style="left:182px;top:1808px;width:4px;height:36px;background:#bbbbbb"></div>
<div style="left:52.5px;top:1314px;width:2452.5px;height:443px;border:6.5px solid #fe0000;border-radius:11px;box-sizing:border-box;background:transparent"></div>
<svg style="position:absolute;left:240px;top:1615px;" width="1270" height="40" viewBox="0 0 1270 40"><path d="M11,9 C60,14 120,16 200,18 C420,22 640,25 834,29 C1000,31 1150,32 1257,31" fill="none" stroke="#fe0000" stroke-width="6" stroke-linecap="round"/></svg>
<div style="left:0px;top:1970px;width:3360px;height:2px;#000;background:#323436"></div>
<div style="left:0px;top:1972px;width:3360px;height:40px;background:#3c3f41"></div>
<div style="left:40px;top:1972px;width:142px;height:40px;background:#2d2f30"></div>
<div style="left:0px;top:2012px;width:3360px;height:2px;background:#474747"></div>
<div style="left:0px;top:2014px;width:3360px;height:40px;background:#3c3f41"></div>
<svg style="position:absolute;left:66px;top:1983px;" width="17" height="21" viewBox="0 0 17 21"><polygon points="0,0 17,10.5 0,21" fill="#aeb0b2"/></svg>
<div class="t" style="left:96px;top:1979.85px;font-size:23.8px;line-height:23.8px;color:#bbbbbb;font-weight:400;"></div>
<div class="t" style="left:96px;top:1979.8px;font-size:23.8px;line-height:23.8px;color:#f0f0f0"><u>4</u>: Run</div>
<svg style="position:absolute;left:208px;top:1983px;" width="22" height="17" viewBox="0 0 22 17"><rect x="0" y="0.6" width="22" height="3.7" fill="#aeb0b2"/><rect x="0" y="6.7" width="14.7" height="3.7" fill="#aeb0b2"/><rect x="0" y="13" width="18" height="3.6" fill="#aeb0b2"/></svg>
<div class="t" style="left:240px;top:1979.8px;font-size:23.8px;line-height:23.8px;color:#bbbbbb"><u>0</u>: Messages</div>
<svg style="position:absolute;left:418px;top:1982px;" width="23" height="23" viewBox="0 0 23 23"><rect x="0" y="0" width="23" height="23" fill="#aeb0b2"/><path d="M4,6 L10,11 L4,16" fill="none" stroke="#3c3f41" stroke-width="2.2"/><rect x="11" y="16" width="7" height="2.2" fill="#3c3f41"/></svg>
<div class="t" style="left:451px;top:1979.85px;font-size:23.8px;line-height:23.8px;color:#bbbbbb;font-weight:400;">Terminal</div>
<svg style="position:absolute;left:582px;top:1981px;" width="26" height="25" viewBox="0 0 26 25"><polygon points="7,0 19,0 26,12.5 19,25 7,25 0,12.5" fill="#aeb0b2"/><polygon points="9,6 19,12.5 9,19" fill="#3c3f41"/></svg>
<div class="t" style="left:616px;top:1979.8px;font-size:23.8px;line-height:23.8px;color:#bbbbbb"><u>8</u>: Services</div>
<svg style="position:absolute;left:777px;top:1984px;" width="22" height="20" viewBox="0 0 22 20"><rect x="0" y="0" width="4" height="3.5" fill="#aeb0b2"/><rect x="7" y="0" width="15" height="3.5" fill="#aeb0b2"/><rect x="0" y="8" width="4" height="3.5" fill="#aeb0b2"/><rect x="7" y="8" width="15" height="3.5" fill="#aeb0b2"/><rect x="0" y="16" width="4" height="3.5" fill="#aeb0b2"/><rect x="7" y="16" width="15" height="3.5" fill="#aeb0b2"/></svg>
<div class="t" style="left:808px;top:1979.8px;font-size:23.8px;line-height:23.8px;color:#bbbbbb"><u>6</u>: TODO</div>
<svg style="position:absolute;left:3155px;top:1979px;" width="28" height="28" viewBox="0 0 28 28"><path d="M25.5,25.5 L13.5,25.5 A11.7,11.7 0 1 1 25.5,13.5 Z" fill="none" stroke="#b8b9ba" stroke-width="3"/></svg>
<div class="t" style="left:3191px;top:1980.66px;font-size:23.2px;line-height:23.2px;color:#bbbbbb;font-weight:400;">Event Log</div>
<svg style="position:absolute;left:10px;top:2019px;" width="30" height="30" viewBox="0 0 30 30"><rect x="8.2" y="4.2" width="17.6" height="17.6" fill="none" stroke="#bbbbbb" stroke-width="2.4"/><path d="M3.3,9 L3.3,25.8 L20.5,25.8" fill="none" stroke="#bbbbbb" stroke-width="2.4"/></svg>
<div class="t" style="left:61px;top:2021.84px;font-size:24.4px;line-height:24.4px;color:#bbbbbb;font-weight:400;">Build completed successfully with 3 warnings in 2 s 132 ... (moments ago)</div>
<svg style="position:absolute;left:2570px;top:2022px;" width="26" height="26" viewBox="0 0 26 26"><rect x="0" y="0" width="26" height="26" rx="4" fill="#21c29a"/><path d="M6,7 L12,12 L6,17" fill="none" stroke="#fff" stroke-width="2.3"/><rect x="13" y="17" width="6" height="2.3" fill="#fff"/></svg>
<div class="t" style="left:2617px;top:2022.85px;font-size:23.8px;line-height:23.8px;color:#bbbbbb;font-weight:400;">26:1</div>
<div class="t" style="left:2684px;top:2022.85px;font-size:23.8px;line-height:23.8px;color:#bbbbbb;font-weight:400;">LF</div>
<div class="t" style="left:2730px;top:2022.85px;font-size:23.8px;line-height:23.8px;color:#bbbbbb;font-weight:400;">UTF-8</div>
<svg style="position:absolute;left:2818px;top:2020px;" width="26" height="26" viewBox="0 0 26 26"><path d="M3.5,11.5 L3.5,7.5 A5.2,5.2 0 0 1 13.9,7.5 L13.9,9" fill="none" stroke="#aeb0b2" stroke-width="2.8"/><rect x="7.5" y="12.3" width="16.5" height="11.5" fill="#aeb0b2"/></svg>
<svg style="position:absolute;left:2869px;top:2019px;" width="26" height="28" viewBox="0 0 26 28"><path d="M5.5,9 L6.5,3 Q7,1.3 9,1.3 L17.5,1.3 Q19.5,1.3 20,3 L21,9 L24.8,9 L24.8,11 L0.8,11 L0.8,9 Z" fill="#aeb0b2"/><path d="M4.6,11 L21.8,11 L21.8,17 Q21.8,23 13.2,23 Q4.6,23 4.6,17 Z" fill="#aeb0b2"/><circle cx="10" cy="15" r="1" fill="#3c3f41"/><circle cx="16.4" cy="15" r="1" fill="#3c3f41"/><path d="M9.5,18.5 Q13.2,21 17,18.5" fill="none" stroke="#3c3f41" stroke-width="1.2"/><path d="M2.3,27.2 Q4,23.8 9,23.8 L17.5,23.8 Q22.5,23.8 24,27.2 Z" fill="#aeb0b2"/></svg>
<div class="t" style="left:2916px;top:2022.85px;font-size:23.8px;line-height:23.8px;color:#bbbbbb;font-weight:400;">4 spaces</div>
<svg style="position:absolute;left:3031px;top:2019px;" width="34" height="32" viewBox="0 0 34 32"><path d="M7,21 A6,6 0 0 1 5.5,9.5 A9.5,9.5 0 0 1 23,6 A7.5,7.5 0 0 1 31,21 Z" fill="#aeb0b2"/><path d="M12.5,8.5 A4,4 0 1 1 17.5,12 Q16,13 16,15.5" fill="none" stroke="#3c3f41" stroke-width="2.6"/><rect x="14.7" y="17.2" width="2.6" height="2.6" fill="#3c3f41"/><g transform="translate(26.5,24.5)"><circle r="7.5" fill="#3c3f41"/><g fill="#aeb0b2"><circle r="4.6"/><rect x="-1.6" y="-6.8" width="3.2" height="13.6"/><rect x="-1.6" y="-6.8" width="3.2" height="13.6" transform="rotate(60)"/><rect x="-1.6" y="-6.8" width="3.2" height="13.6" transform="rotate(120)"/></g><circle r="1.9" fill="#3c3f41"/></g></svg>
<svg style="position:absolute;left:3084px;top:2022px;" width="25" height="25" viewBox="0 0 25 25"><circle cx="12.5" cy="12.5" r="12" fill="#c75450"/><rect x="10.5" y="5" width="4" height="10" fill="#3c3f41"/><rect x="10.5" y="17" width="4" height="4" fill="#3c3f41"/></svg>
<svg style="position:absolute;left:3131px;top:2022px;" width="26" height="26" viewBox="0 0 26 26"><path d="M22,13 A9.5,9.5 0 1 1 19,6" fill="none" stroke="#4285f4" stroke-width="4.5"/><path d="M3.5,13 A9.5,9.5 0 0 1 19,6" fill="none" stroke="#ea4335" stroke-width="4.5"/><path d="M4,17 A9.5,9.5 0 0 0 9,21" fill="none" stroke="#fbbc05" stroke-width="4.5"/><path d="M9,21.5 A9.5,9.5 0 0 0 20,19" fill="none" stroke="#34a853" stroke-width="4.5"/><rect x="13" y="11" width="10" height="4" fill="#4285f4"/></svg>
<div style="left:3168px;top:2014px;width:46px;height:38px;background:#5d5e5f"></div>
<div style="left:3168px;top:2014px;width:10px;height:38px;background:#6b6c6d"></div>
<div class="t" style="left:3188px;top:2022.85px;font-size:23.8px;line-height:23.8px;color:#bbbbbb;font-weight:400;">345 of 6110M</div>
<div style="left:0px;top:0px;width:3360px;height:2054px;border:2px solid #6b6e70;border-top-color:#a8a8a8;border-radius:10px;box-sizing:border-box;pointer-events:none"></div>
<div style="left:0;top:0;width:3360px;height:43px;overflow:hidden"><div style="left:0;top:0;width:3360px;height:2054px;border:2px solid #a0a0a0;border-radius:10px;box-sizing:border-box"></div></div></div></body></html>
